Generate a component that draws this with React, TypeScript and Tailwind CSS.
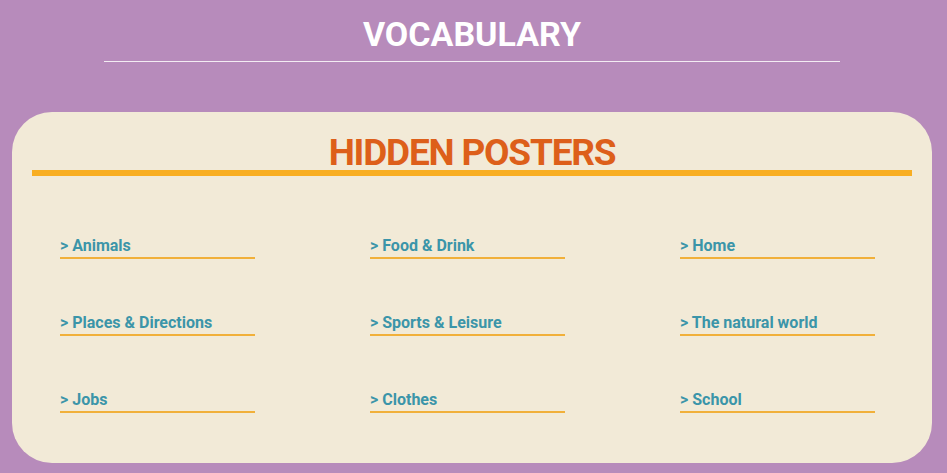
import React from "react";

const items = [
  "Animals",
  "Food & Drink",
  "Home",
  "Places & Directions",
  "Sports & Leisure",
  "The natural world",
  "Jobs",
  "Clothes",
  "School",
];

export default function App() {
  return (
    <div className="min-h-[473px] w-full bg-[#b78bbb] overflow-hidden">
      <div
        className="w-[944px]"
        style={{ fontFamily: "Roboto, 'Noto Sans', sans-serif" }}
      >
        <div className="pt-[14px] h-[61px] flex justify-center">
          <h1 className="text-[34px] leading-[40px] font-bold text-white tracking-[0px]">
            VOCABULARY
          </h1>
        </div>
        <div className="mx-[104px] h-px bg-[#f3ecf3]" />
        <div className="mx-3 mt-[50px] h-[351px] rounded-[40px] bg-[#f2ead7]">
          <div className="pt-[19px] h-[58px] flex justify-center">
            <h2 className="text-[37px] leading-[44px] font-bold text-[#dd5f1a] tracking-[-1.2px]">
              HIDDEN POSTERS
            </h2>
          </div>
          <div className="mx-5 h-[6px] bg-[#f8ae22]" />
          <div className="grid grid-cols-[repeat(3,310px)] gap-y-[54px] pl-[48px] pt-[60px]">
            {items.map((t) => (
              <div key={t} className="w-[195px]">
                <div className="text-[16px] leading-[19px] font-bold text-[#3b95a9]">
                  &gt; {t}
                </div>
                <div className="h-[2px] bg-[#f1b03a] mt-[2px]" />
              </div>
            ))}
          </div>
        </div>
      </div>
    </div>
  );
}
